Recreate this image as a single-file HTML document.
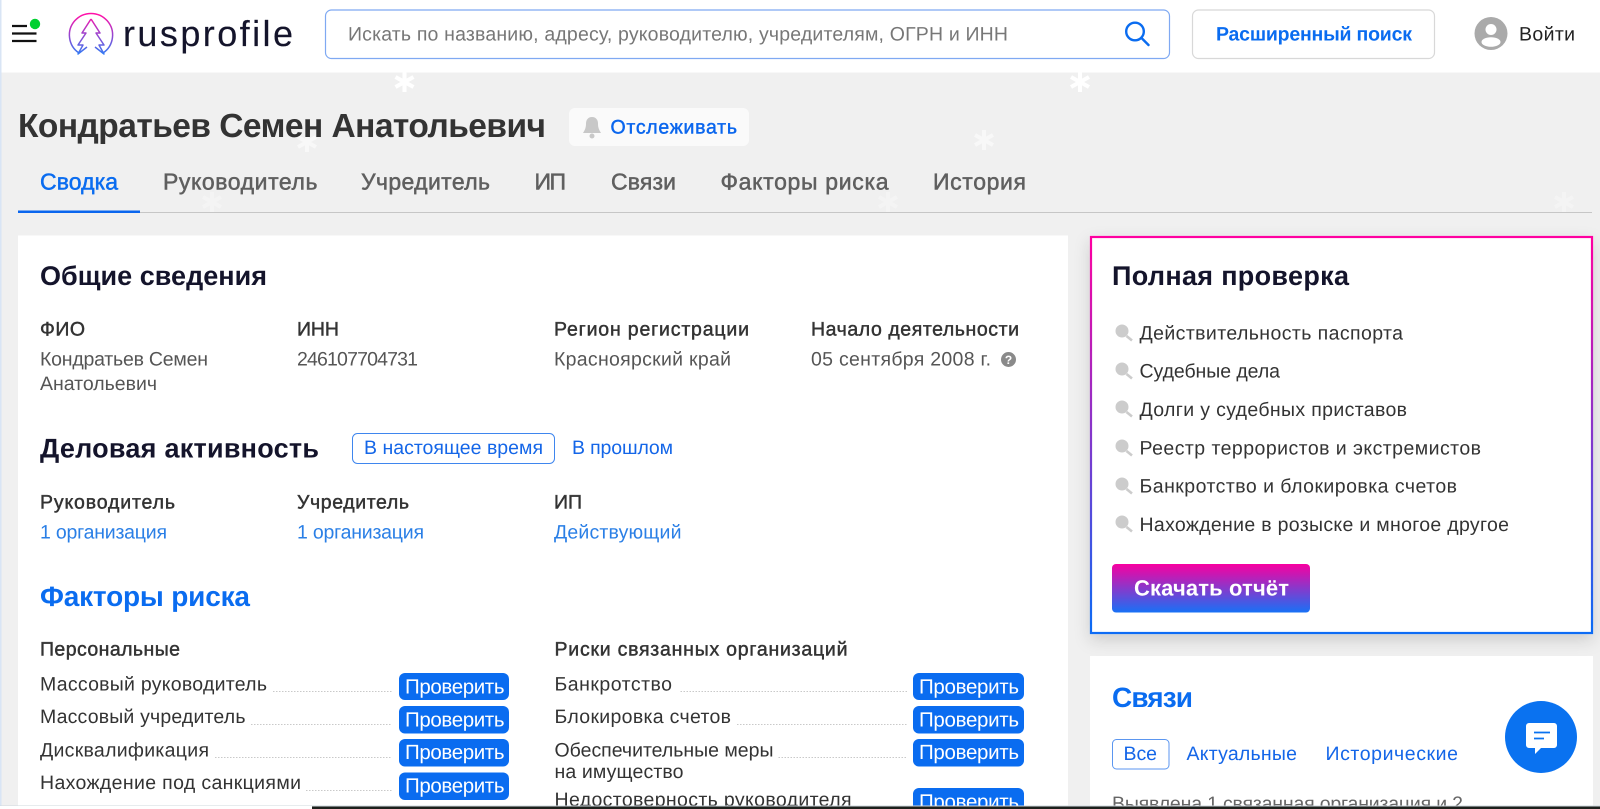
<!DOCTYPE html>
<html lang="ru">
<head>
<meta charset="utf-8">
<title>Кондратьев Семен Анатольевич</title>
<style>
html,body{margin:0;padding:0;background:#f0f0f0;overflow:hidden;width:1600px;height:809px}
svg{display:block}
text{font-family:"Liberation Sans","DejaVu Sans",sans-serif;font-size:19.5px;fill:#333;text-rendering:geometricPrecision}
.h{font-size:27px;font-weight:700;fill:#14142b}
.hb{font-size:28px;font-weight:700;fill:#0a6cf0}
.l{fill:#333;stroke:#333;stroke-width:.45px}
.v{fill:#555}
.a{fill:#2a7fe6}
.b{fill:#1466e8}
.t{font-size:23px;fill:#5f5f5f;stroke:#5f5f5f;stroke-width:.5px}
.r{fill:#333}
.p{font-size:20.5px;fill:#fff}
.d{stroke:#c9c9c9;stroke-width:1;stroke-dasharray:1.5 1.5}
.f{stroke:#fff;stroke-width:4;fill:none}
</style>
</head>
<body>
<svg width="1600" height="809" viewBox="0 0 1600 809" xmlns="http://www.w3.org/2000/svg">
<defs>
<linearGradient id="g1" gradientUnits="userSpaceOnUse" x1="0" y1="236" x2="0" y2="634"><stop offset="0" stop-color="#ff00a0"/><stop offset="1" stop-color="#0a6cf5"/></linearGradient>
<linearGradient id="g2" gradientUnits="userSpaceOnUse" x1="0" y1="564" x2="0" y2="612"><stop offset="0" stop-color="#f800a0"/><stop offset="1" stop-color="#1a70f5"/></linearGradient>
<linearGradient id="g3" gradientUnits="userSpaceOnUse" x1="0" y1="15" x2="0" y2="55"><stop offset="0" stop-color="#ff10a8"/><stop offset="1" stop-color="#2f7df5"/></linearGradient>
<filter id="s" x="-10%" y="-10%" width="120%" height="125%"><feDropShadow dx="0" dy="6" stdDeviation="8" flood-color="#000" flood-opacity=".15"/></filter>
<clipPath id="c"><rect x="0" y="0" width="1600" height="805.5"/></clipPath>
</defs>

<rect width="1600" height="809" fill="#f0f0f0"/>

<g clip-path="url(#c)">
<!-- snow -->
<g class="f"><path d="M404.500 72v20M395.500 77l18 10M413.500 77l-18 10"/></g>
<g class="f"><path d="M1080 72v20M1071 77l18 10M1089 77l-18 10"/></g>
<g class="f" opacity=".55"><path d="M984 130v20M975 135l18 10M993 135l-18 10"/></g>
<g class="f" opacity=".5"><path d="M307 132v20M298 137l18 10M316 137l-18 10"/></g>
<g class="f" opacity=".3"><path d="M212 192v20M203 197l18 10M221 197l-18 10"/></g>
<g class="f" opacity=".3"><path d="M888 192v20M879 197l18 10M897 197l-18 10"/></g>
<g class="f" opacity=".3"><path d="M1564 192v20M1555 197l18 10M1573 197l-18 10"/></g>

<!-- header -->
<rect x="0" y="0" width="1600" height="72.5" fill="#fff"/>
<path d="M12 26h15M12 33.500h24.500M12 41h24.500" stroke="#111" stroke-width="2.200" fill="none"/>
<circle cx="35" cy="24" r="5.200" fill="#00d030"/>
<g fill="none" stroke="url(#g3)" stroke-width="1.500" stroke-linejoin="round">
<path d="M79 53A21.600 21.600 0 1 1 103 53"/>
<path d="M91 19L82 33H86L78 45H83L78 54L87 47M91 19L100 33H96L104 45H99L104 54L95 47"/>
</g>
<text x="123" y="46" textLength="170" lengthAdjust="spacing" style="font-size:36px;fill:#14142b;stroke:#14142b;stroke-width:.15px">rusprofile</text>

<rect x="325.500" y="10" width="844" height="48.500" rx="6" fill="#fff" stroke="#7fa9f2" stroke-width="1.200"/>
<text x="348" y="40.500" textLength="660" lengthAdjust="spacing" style="fill:#777">Искать по названию, адресу, руководителю, учредителям, ОГРН и ИНН</text>
<circle cx="1135" cy="31.500" r="8.800" fill="none" stroke="#0a6cf0" stroke-width="2.400"/>
<path d="M1141.500 38l7 7" stroke="#0a6cf0" stroke-width="2.400" stroke-linecap="round"/>

<rect x="1192.500" y="10" width="242" height="48.500" rx="6" fill="#fff" stroke="#d8d8d8" stroke-width="1.200"/>
<text x="1216" y="40.500" textLength="196" lengthAdjust="spacing" style="font-weight:700;fill:#0a6cf0">Расширенный поиск</text>

<circle cx="1491" cy="33.500" r="16.500" fill="#aaa"/>
<circle cx="1491" cy="29.500" r="5.500" fill="#fff"/>
<ellipse cx="1491" cy="42" rx="9.500" ry="4.800" fill="#fff"/>
<text x="1519" y="40.500" textLength="56" lengthAdjust="spacing" style="fill:#222">Войти</text>

<!-- title -->
<text x="18" y="137" textLength="528" lengthAdjust="spacing" style="font-size:33.500px;font-weight:700;fill:#333">Кондратьев Семен Анатольевич</text>
<rect x="569" y="108" width="180" height="38" rx="6" fill="#fafafa"/>
<path d="M592 117c-4 0-6 3-6 6.500 0 5-1.500 7-3 9.500h18c-1.500-2.500-3-4.500-3-9.500 0-3.500-2-6.500-6-6.500z" fill="#c8c8c8"/>
<circle cx="592" cy="136" r="2.500" fill="#c8c8c8"/>
<text x="610.500" y="133.500" textLength="126.500" lengthAdjust="spacing" style="fill:#0a66ee;stroke:#0a66ee;stroke-width:.45px">Отслеживать</text>

<!-- tabs -->
<text class="t" x="40" y="189.500" textLength="78" lengthAdjust="spacing" style="fill:#0a6cf0;stroke:#0a6cf0">Сводка</text>
<text class="t" x="163" y="189.500" textLength="154.500" lengthAdjust="spacing">Руководитель</text>
<text class="t" x="361" y="189.500" textLength="129" lengthAdjust="spacing">Учредитель</text>
<text class="t" x="534.500" y="189.500" textLength="31.500" lengthAdjust="spacing">ИП</text>
<text class="t" x="611" y="189.500" textLength="65" lengthAdjust="spacing">Связи</text>
<text class="t" x="720.500" y="189.500" textLength="168" lengthAdjust="spacing">Факторы риска</text>
<text class="t" x="933" y="189.500" textLength="93" lengthAdjust="spacing">История</text>
<rect x="18" y="212" width="1574" height="1" fill="#c6c6c6"/>
<rect x="18" y="210.500" width="122" height="2.500" fill="#0a66ee"/>

<!-- left card -->
<rect x="18" y="235.500" width="1050" height="575" fill="#fff"/>
<text class="h" x="40" y="285" textLength="227" lengthAdjust="spacing">Общие сведения</text>

<text class="l" x="40" y="335.500" textLength="45" lengthAdjust="spacing">ФИО</text>
<text class="l" x="297" y="335.500" textLength="42" lengthAdjust="spacing">ИНН</text>
<text class="l" x="554" y="335.500" textLength="195" lengthAdjust="spacing">Регион регистрации</text>
<text class="l" x="811" y="335.500" textLength="208" lengthAdjust="spacing">Начало деятельности</text>
<text class="v" x="40" y="365.500" textLength="168" lengthAdjust="spacing">Кондратьев Семен</text>
<text class="v" x="40" y="390" textLength="117" lengthAdjust="spacing">Анатольевич</text>
<text class="v" x="297" y="365.500" textLength="121" lengthAdjust="spacing">246107704731</text>
<text class="v" x="554" y="365.500" textLength="177" lengthAdjust="spacing">Красноярский край</text>
<text class="v" x="811" y="365.500" textLength="180" lengthAdjust="spacing">05 сентября 2008 г.</text>
<circle cx="1008.500" cy="359.500" r="7.500" fill="#8a8a8a"/>
<text x="1008.500" y="364" text-anchor="middle" style="font-size:12px;font-weight:700;fill:#fff">?</text>

<text class="h" x="40" y="457.500" textLength="279" lengthAdjust="spacing">Деловая активность</text>
<rect x="352.500" y="433.500" width="202" height="30" rx="5" fill="#fff" stroke="#3f86ee" stroke-width="1"/>
<text class="b" x="364" y="454" textLength="179" lengthAdjust="spacing">В настоящее время</text>
<text class="b" x="572" y="454" textLength="101" lengthAdjust="spacing">В прошлом</text>

<text class="l" x="40" y="508.500" textLength="135" lengthAdjust="spacing">Руководитель</text>
<text class="l" x="297" y="508.500" textLength="112" lengthAdjust="spacing">Учредитель</text>
<text class="l" x="554" y="508.500" textLength="28" lengthAdjust="spacing">ИП</text>
<text class="a" x="40" y="538.500" textLength="127" lengthAdjust="spacing">1 организация</text>
<text class="a" x="297" y="538.500" textLength="127" lengthAdjust="spacing">1 организация</text>
<text class="a" x="554" y="538.500" textLength="127.500" lengthAdjust="spacing">Действующий</text>

<text class="hb" x="40" y="606" textLength="210" lengthAdjust="spacing">Факторы риска</text>

<text class="l" x="40" y="655.500" textLength="140" lengthAdjust="spacing">Персональные</text>
<text class="l" x="554.500" y="655.500" textLength="293" lengthAdjust="spacing">Риски связанных организаций</text>

<text class="r" x="40" y="690.500" textLength="227" lengthAdjust="spacing">Массовый руководитель</text>
<text class="r" x="40" y="723" textLength="205.500" lengthAdjust="spacing">Массовый учредитель</text>
<text class="r" x="40" y="756.500" textLength="169" lengthAdjust="spacing">Дисквалификация</text>
<text class="r" x="40" y="789" textLength="261" lengthAdjust="spacing">Нахождение под санкциями</text>
<path class="d" d="M273 691.500H392M251 724.500H392M215 757.500H392M306 790.500H392"/>
<rect x="399" y="673" width="110" height="27" rx="6" fill="#0a6cf0"/>
<rect x="399" y="706" width="110" height="27.500" rx="6" fill="#0a6cf0"/>
<rect x="399" y="739" width="110" height="27.500" rx="6" fill="#0a6cf0"/>
<rect x="399" y="772.500" width="110" height="27.500" rx="6" fill="#0a6cf0"/>
<text class="p" x="405" y="693.500" textLength="99.500" lengthAdjust="spacing">Проверить</text>
<text class="p" x="405" y="726.500" textLength="99.500" lengthAdjust="spacing">Проверить</text>
<text class="p" x="405" y="759" textLength="99.500" lengthAdjust="spacing">Проверить</text>
<text class="p" x="405" y="792.500" textLength="99.500" lengthAdjust="spacing">Проверить</text>

<text class="r" x="554.500" y="690.500" textLength="117.500" lengthAdjust="spacing">Банкротство</text>
<text class="r" x="554.500" y="723" textLength="176.500" lengthAdjust="spacing">Блокировка счетов</text>
<text class="r" x="554.500" y="756.500" textLength="219" lengthAdjust="spacing">Обеспечительные меры</text>
<text class="r" x="554.500" y="778" textLength="129" lengthAdjust="spacing">на имущество</text>
<text class="r" x="554.500" y="806" textLength="297" lengthAdjust="spacing">Недостоверность руководителя</text>
<path class="d" d="M680.500 691.500H907M737 724.500H907M778.500 757.500H907"/>
<rect x="913" y="673" width="111" height="27" rx="6" fill="#0a6cf0"/>
<rect x="913" y="706" width="111" height="27.500" rx="6" fill="#0a6cf0"/>
<rect x="913" y="739" width="111" height="27.500" rx="6" fill="#0a6cf0"/>
<rect x="913" y="788" width="111" height="27" rx="6" fill="#0a6cf0"/>
<text class="p" x="919" y="693.500" textLength="100" lengthAdjust="spacing">Проверить</text>
<text class="p" x="919" y="726.500" textLength="100" lengthAdjust="spacing">Проверить</text>
<text class="p" x="919" y="759" textLength="100" lengthAdjust="spacing">Проверить</text>
<text class="p" x="919" y="808.500" textLength="100" lengthAdjust="spacing">Проверить</text>

<!-- right card 1 -->
<rect x="1091" y="237" width="501" height="396" fill="#fff" stroke="url(#g1)" stroke-width="2.200" filter="url(#s)"/>
<text class="h" x="1112" y="285" textLength="237" lengthAdjust="spacing">Полная проверка</text>
<g fill="#ccc" stroke="#ccc">
<circle cx="1122" cy="331" r="6"/><path d="M1126.500 336l5.500 4.500" stroke-width="2.600" fill="none"/>
<circle cx="1122" cy="369" r="6"/><path d="M1126.500 374l5.500 4.500" stroke-width="2.600" fill="none"/>
<circle cx="1122" cy="407" r="6"/><path d="M1126.500 412l5.500 4.500" stroke-width="2.600" fill="none"/>
<circle cx="1122" cy="446" r="6"/><path d="M1126.500 451l5.500 4.500" stroke-width="2.600" fill="none"/>
<circle cx="1122" cy="484" r="6"/><path d="M1126.500 489l5.500 4.500" stroke-width="2.600" fill="none"/>
<circle cx="1122" cy="522" r="6"/><path d="M1126.500 527l5.500 4.500" stroke-width="2.600" fill="none"/>
</g>
<text class="r" x="1139.500" y="339.500" textLength="263.500" lengthAdjust="spacing">Действительность паспорта</text>
<text class="r" x="1139.500" y="377.500" textLength="140.500" lengthAdjust="spacing">Судебные дела</text>
<text class="r" x="1139.500" y="416" textLength="267.500" lengthAdjust="spacing">Долги у судебных приставов</text>
<text class="r" x="1139.500" y="454.500" textLength="341.500" lengthAdjust="spacing">Реестр террористов и экстремистов</text>
<text class="r" x="1139.500" y="492.500" textLength="317.500" lengthAdjust="spacing">Банкротство и блокировка счетов</text>
<text class="r" x="1139.500" y="531" textLength="369.500" lengthAdjust="spacing">Нахождение в розыске и многое другое</text>
<rect x="1112" y="564" width="198" height="48.500" rx="4" fill="url(#g2)"/>
<text x="1134" y="595.500" textLength="155" lengthAdjust="spacing" style="font-size:22px;font-weight:700;fill:#fff">Скачать отчёт</text>

<!-- right card 2 -->
<rect x="1090" y="656" width="503" height="160" fill="#fff"/>
<text class="hb" x="1112" y="707" textLength="81" lengthAdjust="spacing">Связи</text>
<rect x="1112.500" y="739.500" width="56.500" height="29.500" rx="4" fill="#fff" stroke="#5b96f0" stroke-width="1"/>
<text class="b" x="1123.500" y="760" textLength="33.500" lengthAdjust="spacing">Все</text>
<text class="b" x="1186.500" y="760" textLength="110.500" lengthAdjust="spacing">Актуальные</text>
<text class="b" x="1325.500" y="760" textLength="132.500" lengthAdjust="spacing">Исторические</text>
<text x="1112" y="810" textLength="351" lengthAdjust="spacing" style="fill:#666">Выявлена 1 связанная организация и 2</text>

<!-- chat -->
<circle cx="1541" cy="737" r="36" fill="#0a72f0"/>
<path d="M1529 723h25a3 3 0 0 1 3 3v19a3 3 0 0 1-3 3h-13l-6 6v-6h-6a3 3 0 0 1-3-3v-19a3 3 0 0 1 3-3z" fill="#fff"/>
<path d="M1534 732.500h16M1534 738.500h10" stroke="#0a72f0" stroke-width="1.800"/>
</g>

<!-- window edges -->
<rect x="0" y="0" width="1.500" height="806" fill="#d9e5f5"/>
<rect x="0" y="805.500" width="1600" height="1" fill="#cfd8de"/>
<rect x="0" y="806" width="312" height="3" fill="#fff"/>
<rect x="312" y="806.500" width="1288" height="2.500" fill="#1d201c"/>
</svg>
</body>
</html>
